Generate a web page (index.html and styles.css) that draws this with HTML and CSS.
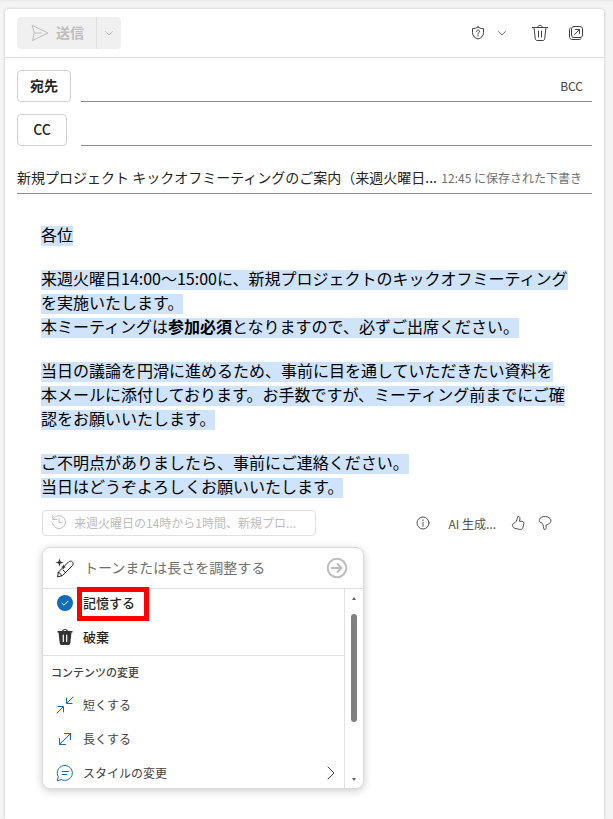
FILE: index.html
```html
<!DOCTYPE html>
<html lang="ja">
<head>
<meta charset="utf-8">
<meta name="viewport" content="width=device-width, initial-scale=1">
<title>新規プロジェクト キックオフミーティングのご案内</title>
<link rel="stylesheet" href="styles.css">
</head>
<body>
<main class="compose">
  <header class="toolbar">
    <div class="send-group">
      <button class="send" disabled>
        <svg width="18" height="18" viewBox="0 0 18 18"><path d="M1.5 1.5 17 9 1.5 16.5 3.2 9ZM3.2 9H10"/></svg>
        <span>送信</span>
      </button>
      <button class="send-more" disabled aria-label="送信オプション">
        <svg width="10" height="10" viewBox="0 0 10 10"><path d="M1.5 3.5 5 7l3.500-3.500"/></svg>
      </button>
    </div>
    <div class="tools">
      <button class="tool" aria-label="秘密度">
        <svg width="14" height="14" viewBox="0 0 14 14"><path d="M7 1C5.500 2.200 3.500 2.600 1.500 2.600V6.500C1.500 9.800 3.500 12 7 13c3.500-1 5.500-3.200 5.500-6.500V2.600C10.500 2.600 8.500 2.200 7 1ZM5.500 5.500C5.500 3.500 8.500 3.500 8.500 5.500 8.500 6.500 7 6.600 7 8M7 9.200v1"/></svg>
      </button>
      <button class="tool tool-chevron" aria-label="秘密度の選択肢">
        <svg width="10" height="10" viewBox="0 0 10 10"><path d="M1.500 3.500 5 7l3.500-3.500"/></svg>
      </button>
      <button class="tool tool-trash" aria-label="破棄">
        <svg width="18" height="18" viewBox="0 0 18 18"><path d="M1.500 3.500h15M6.800 3.300C6.800.5 11.200.5 11.200 3.300M3 3.500l1.300 11.300c.1 1 .8 1.700 1.800 1.700h5.800c1 0 1.700-.7 1.800-1.700L15 3.500M7.500 7v6M10.500 7v6"/></svg>
      </button>
      <button class="tool tool-popout" aria-label="新しいウィンドウで開く">
        <svg width="16" height="16" viewBox="0 0 16 16"><rect x="3.500" y="1.500" width="11" height="11" rx="2.500"/><path d="M2.300 3C1.700 3.500 1.500 4 1.500 5v6c0 2.500 1 3.500 3.500 3.500h6c1 0 1.500-.2 2-.8M6.500 9.500l5-5M7.500 4.500h4v4"/></svg>
      </button>
    </div>
  </header>

  <section class="fields">
    <div class="field-row">
      <button class="pick pick-to" id="to-label">宛先</button>
      <div class="line"><input type="text" aria-labelledby="to-label"><button class="bcc">BCC</button></div>
    </div>
    <div class="field-row">
      <button class="pick pick-cc" id="cc-label">CC</button>
      <div class="line"><input type="text" aria-labelledby="cc-label"></div>
    </div>
    <div class="subject-row">
      <input class="subject" type="text" aria-label="件名" value="新規プロジェクト キックオフミーティングのご案内（来週火曜日...">
      <span class="saved">12:45 に保存された下書き</span>
    </div>
  </section>

  <section class="content">
    <div class="message">
      <p><span class="mark">各位</span></p>
      <p><span class="mark">来週火曜日14:00～15:00に、新規プロジェクトのキックオフミーティング<br>を実施いたします。</span><br>
        <span class="mark">本ミーティングは<b>参加必須</b>となりますので、必ずご出席ください。</span></p>
      <p><span class="mark">当日の議論を円滑に進めるため、事前に目を通していただきたい資料を<br>本メールに添付しております。お手数ですが、ミーティング前までにご確<br>認をお願いいたします。</span></p>
      <p><span class="mark">ご不明点がありましたら、事前にご連絡ください。</span><br>
        <span class="mark">当日はどうぞよろしくお願いいたします。</span></p>
    </div>

    <div class="draft-bar">
      <button class="history">
        <svg width="16" height="16" viewBox="0 0 16 16"><path d="M1.800 1.500v4h4M2 5.500A6.500 6.500 0 1 1 1.500 9M8 4.500V8.500h3"/></svg>
        <span>来週火曜日の14時から1時間、新規プロ...</span>
      </button>
      <div class="feedback">
        <svg width="14" height="14" viewBox="0 0 14 14"><circle cx="7" cy="7" r="6"/><path d="M7 6.300v4M7 3.800v1"/></svg>
        <span class="ai-note">AI 生成...</span>
        <button class="tool" aria-label="良い">
          <svg width="14" height="16" viewBox="0 0 14 16"><path d="M7.300 1.300c1.500 0 2.200 1.600 1.200 5h2.300c1.600 0 2.300 1.100 2 2.500l-.8 3.400c-.4 1.800-1.600 2.500-3.300 2.200l-4.700-1C2.500 13 2.200 12.200 1.700 11.200 1 9.800 1.500 8.600 3 8.200 5 7.500 5.900 5.400 6.300 3.300Z"/></svg>
        </button>
        <button class="tool tool-down" aria-label="悪い">
          <svg width="14" height="16" viewBox="0 0 14 16"><path d="M6.700 14.700c1.500 0 1.700-1.600 1.200-4.200 1.600-1.200 3.600-1.600 4.600-3.200.8-1.400.4-3.600-1.500-4.700C8.900 1.400 5.900 1.200 4 2 2.500 2.600 1.200 3.800 1.300 5.500c.1 1.600 1.400 2.200 2.500 2.500C5 8.500 5.300 10.600 5.600 12.700Z"/></svg>
        </button>
      </div>
    </div>

    <div class="menu">
      <div class="prompt">
        <svg width="20" height="20" viewBox="0 0 20 20"><path d="M2.500 18.500l1-4.500L13.500 4c2.800-2.500 6.300 1 3.800 3.800L7.300 17.500ZM3 14.500c2 .2 3 1.200 3.300 3.200M8 12l3 3"/><path class="spark" d="M4.500.5l1 3 3 1-3 1-1 3-1-3-3-1 3-1ZM8.500 6.500l.7 1.800 1.800.7-1.800.7-.7 1.800-.7-1.800L6 9l1.800-.7Z"/></svg>
        <input type="text" aria-label="調整の内容" placeholder="トーンまたは長さを調整する">
        <button class="go" aria-label="生成">
          <svg width="22" height="22" viewBox="0 0 22 22"><circle cx="11" cy="11" r="9.300"/><path d="M6 11h9.500M11.500 7l4 4-4 4"/></svg>
        </button>
      </div>
      <div class="menu-body">
        <div class="options">
          <div class="group actions">
            <button class="option">
              <svg width="16" height="16" viewBox="0 0 16 16"><circle class="dot" cx="8" cy="8" r="8"/><path class="tick" d="M5 8.300 7 10.200 11 6.200"/></svg>
              <span class="target">記憶する</span>
            </button>
            <button class="option">
              <svg width="16" height="18" viewBox="0 0 16 18"><path class="bin" d="M.5 3h4.600C5.300.2 10.700.2 10.900 3h4.600v1.500h-1L13.300 15c-.1 1.200-.8 2-2 2H4.700c-1.200 0-1.900-.8-2-2L1.500 4.500h-1ZM6.500 3h3C9.300 1.700 6.700 1.700 6.500 3Z"/><path class="slot" d="M6.300 7v6.500M9.700 7v6.500"/></svg>
              <span>破棄</span>
            </button>
          </div>
          <div class="group changes">
            <h2>コンテンツの変更</h2>
            <button class="option">
              <svg class="blue" width="18" height="18" viewBox="0 0 18 18"><path d="M17 1l-6 6M10.500 2v5.500H16M1 17l6-6M2 10.500h5.500V16"/></svg>
              <span>短くする</span>
            </button>
            <button class="option">
              <svg class="blue" width="18" height="18" viewBox="0 0 18 18"><path d="M3.500 14.500l11-11M8.500 3.500h6v6M3.500 8.500v6h6"/></svg>
              <span>長くする</span>
            </button>
            <button class="option">
              <svg class="blue" width="18" height="18" viewBox="0 0 18 18"><path d="M1.500 16.500l.8-3.800A7.500 7.500 0 1 1 5.500 15.700ZM6 7.500h6.500M6 10.500h4.500"/></svg>
              <span>スタイルの変更</span>
              <svg class="next" width="8" height="14" viewBox="0 0 8 14"><path d="M1 1l6 6-6 6"/></svg>
            </button>
          </div>
        </div>
        <div class="scroll" aria-hidden="true">
          <i class="up"></i><i class="thumb"></i><i class="down"></i>
        </div>
      </div>
    </div>
  </section>
</main>
</body>
</html>
```

FILE: styles.css
```css
* { box-sizing: border-box; }

body {
  margin: 0;
  min-height: 100vh;
  display: flex;
  padding: 9px 9px 0 5px;
  background: linear-gradient(#eaeaea, #f4f4f4 3px);
  font-family: "Noto Sans CJK JP", sans-serif;
  font-size: 14px;
  color: #242424;
  overflow: hidden;
}

button, input {
  font: inherit;
  color: inherit;
  border: 0;
  padding: 0;
  margin: 0;
  background: none;
  outline: 0;
}

svg {
  display: block;
  flex: none;
  fill: none;
  stroke: currentColor;
  stroke-linecap: round;
  stroke-linejoin: round;
}

.compose {
  flex: 1;
  min-width: 0;
  background: #fff;
  border-radius: 4px 4px 0 0;
  box-shadow: 0 0 3px rgba(0, 0, 0, .22);
}

.toolbar {
  display: flex;
  justify-content: space-between;
  align-items: center;
  padding: 8px 20px 8px 12px;
  border-bottom: 1px solid #e0e0e0;
}

.send-group {
  display: flex;
  height: 32px;
  border-radius: 4px;
  background: #f0f0f0;
  color: #bdbdbd;
}

.send {
  display: flex;
  align-items: center;
  gap: 7px;
  padding: 0 12px 0 14px;
  font-weight: 700;
}

.send span { padding-bottom: 2px; }

.send-more {
  width: 25px;
  display: grid;
  place-items: center;
  border-left: 1px solid #e0e0e0;
}

.tools {
  display: flex;
  align-items: center;
  color: #424242;
}

.tool-chevron { margin-left: 12px; color: #707070; }
.tool-trash { margin-left: 24px; }
.tool-popout { margin-left: 19px; }

.fields {
  display: flex;
  flex-direction: column;
  gap: 12px;
  padding: 12px 12px 0;
}

.field-row {
  display: grid;
  grid-template-columns: 64px 1fr;
  height: 32px;
}

.pick {
  justify-self: start;
  padding-bottom: 2px;
  border: 1px solid #d1d1d1;
  border-radius: 4px;
  font-weight: 500;
}

.pick-to { width: 54px; font-weight: 700; }
.pick-cc { width: 50px; }

.line, .subject-row {
  display: flex;
  align-items: center;
  border-bottom: 1px solid #8a8a8a;
}

.line input { flex: 1; min-width: 0; }

.bcc {
  padding-right: 9px;
  font-size: 12px;
  color: #424242;
}

.subject-row {
  height: 36px;
  gap: 4px;
  padding-right: 10px;
  padding-top: 3px;
}

.subject { flex: 1; min-width: 0; }

.saved {
  flex: none;
  font-size: 12px;
  color: #707070;
}

.content { padding: 28px 36px 0; }

.message {
  font-size: 16px;
  line-height: 24px;
  color: #000;
  white-space: nowrap;
}

.message p { margin: 0 0 20px; }

.mark {
  background: linear-gradient(#cfe3fa, #cfe3fa) 0 100% / 100% 20px no-repeat;
  -webkit-box-decoration-break: clone;
  box-decoration-break: clone;
}

.draft-bar {
  display: flex;
  justify-content: space-between;
  align-items: center;
  margin-top: -8px;
  padding: 0 16px 0 1px;
}

.history {
  display: flex;
  align-items: center;
  gap: 7px;
  width: 274px;
  height: 26px;
  padding: 0 8px 2px;
  border: 1px solid #e0e0e0;
  border-radius: 4px;
  font-size: 12px;
  color: #bdbdbd;
}

.feedback {
  display: flex;
  align-items: center;
  font-size: 12px;
  color: #505050;
}

.ai-note { margin: 0 15px 0 18px; }
.tool-down { margin-left: 13px; }

.menu {
  width: 322px;
  margin: 11px 0 0 1px;
  border: 1px solid #dcdcdc;
  border-radius: 8px;
  background: #fff;
  box-shadow: 0 2px 8px rgba(0, 0, 0, .2);
  overflow: hidden;
}

.prompt {
  display: flex;
  align-items: center;
  height: 41px;
  padding: 0 15px 0 12px;
  border-bottom: 1px solid #e0e0e0;
}

.prompt input {
  flex: 1;
  min-width: 0;
  margin-left: 9px;
  padding-bottom: 2px;
}

.prompt input::placeholder { color: #707070; opacity: 1; }
.spark { fill: #333; stroke: none; }

.go { color: #bdbdbd; stroke-width: 2px; }

.menu-body {
  display: flex;
  height: 199px;
}

.options { flex: 1; }

.actions {
  margin-top: -2px;
  border-bottom: 1px solid #e0e0e0;
  font-size: 13px;
  font-weight: 500;
}

.changes { font-size: 12px; color: #424242; }

.changes h2 {
  margin: 0;
  padding-left: 8px;
  font-size: 11px;
  line-height: 33px;
  font-weight: 500;
}

.option {
  display: grid;
  grid-template-columns: 18px 1fr auto;
  align-items: center;
  justify-items: start;
  gap: 9px;
  width: 100%;
  height: 34px;
  padding: 0 9px 2px 13px;
}

.option > svg:first-child { justify-self: center; }
.option > span { padding-bottom: 1px; }

.dot { fill: #0f6cbd; stroke: none; }
.tick { stroke: #fff; }
.bin { fill: #333; stroke: none; fill-rule: evenodd; }
.slot { stroke: #fff; stroke-width: 1.2; }
.blue { color: #0f6cbd; }

.target { position: relative; }

.target::after {
  content: "";
  position: absolute;
  inset: -6px -14px -8px -6px;
  border: 5px solid #f00;
}

.scroll {
  width: 19px;
  display: flex;
  flex-direction: column;
  align-items: center;
  justify-content: space-between;
  padding: 8px 0 7px;
  border-left: 1px solid #e0e0e0;
}

.thumb {
  width: 6px;
  height: 108px;
  margin: 0 0 42px;
  border-radius: 3px;
  background: #808080;
}

.up, .down {
  border: 2px solid transparent;
}

.up { border-top: 0; border-bottom: 3px solid #606060; }
.down { border-bottom: 0; border-top: 3px solid #606060; }
```
